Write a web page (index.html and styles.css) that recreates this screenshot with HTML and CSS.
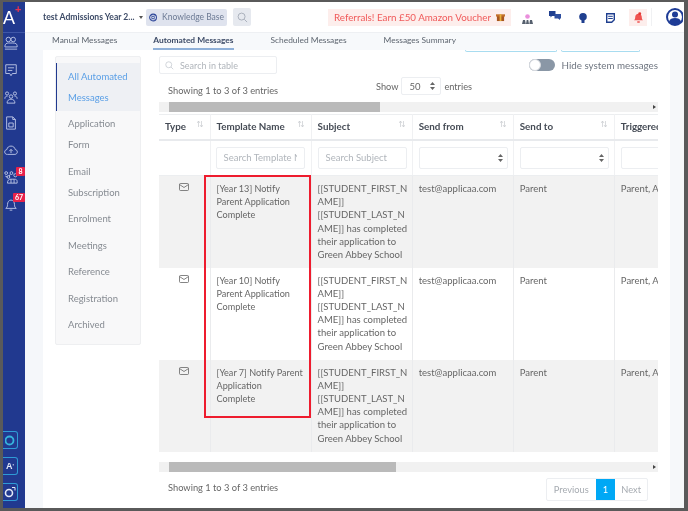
FILE: index.html
```html
<!doctype html>
<html>
  <head>
    <meta charset="utf-8">
    <meta name="viewport" content="width=device-width">
    <link rel="stylesheet" href="styles.css">
  </head>
  <body>
    <div class="frame">
      <nav class="side">
        <div class="logo">A<span class="plus">+</span></div>
        <div class="side-icons">
          <svg class="side-icon" viewBox="0 0 16 16"><circle cx="5" cy="4" r="2.600"/><circle cx="10.500" cy="4" r="2.600"/><path d="M1 12c0-3 2-4 4-4h5c3 0 5 1 5 3v1.500H1zM1 15h14"/></svg>
          <svg class="side-icon" viewBox="0 0 16 16"><path d="M2 2h12v10H9.500L8 14.500 6.500 12H2zM4.500 5.500h7M4.500 8.500h5"/></svg>
          <svg class="side-icon" viewBox="0 0 16 16"><circle cx="3.500" cy="4" r="1.800"/><circle cx="12.500" cy="4" r="1.800"/><circle cx="8" cy="7.500" r="2"/><path d="M1 10c0-2 1-3 3-3M15 10c0-2-1-3-3-3M3.500 15c0-3 2-4.500 4.500-4.500s4.500 1.500 4.500 4.500z"/></svg>
          <svg class="side-icon" viewBox="0 0 16 16"><path d="M3 1h7l3 3v11H3zM10 1v3h3M5.500 8h5v4.500h-5z"/></svg>
          <svg class="side-icon" viewBox="0 0 16 16"><path d="M4 13H3.500C2 13 .8 11.800.8 10.200.8 8.700 2 7.600 3.300 7.500 3.700 5 5.600 3.500 8 3.500c2.600 0 4.400 1.700 4.800 4 1.400.1 2.400 1.200 2.400 2.700S14 13 12.500 13H4M8 11.500V7.500M6 9.300 8 7.300l2 2"/></svg>
          <div class="side-item">
            <svg class="side-icon" viewBox="0 0 16 16"><circle cx="2.500" cy="3.500" r="1.600"/><circle cx="8.500" cy="3.500" r="1.600"/><circle cx="13" cy="6" r="1.800"/><circle cx="5" cy="8" r="1.600"/><path d="M1.500 7 4 8M7 5l-1 2M4 15c0-3 1-4.500 4-4.500h4c2 0 3 1 3 2.500v2zM8 10.500V15M11.500 10.500V15"/></svg>
            <span class="badge badge-8">8</span>
          </div>
          <div class="side-item">
            <svg class="side-icon" viewBox="0 0 16 16"><path d="M2 13c1.500-1 2-2 2-4.500S5.500 3.500 8 3.500s4 2.500 4 5 .5 3.500 2 4.500zM6.500 15h3"/></svg>
            <span class="badge badge-67">67</span>
          </div>
        </div>
        <div class="tiles">
          <div class="tile"><svg width="11" height="11" viewBox="0 0 11 11"><circle cx="4.500" cy="5.500" r="4" fill="none" stroke="#35b4dc" stroke-width="1.800"/></svg></div>
          <div class="tile tile-text">A<sup>'</sup></div>
          <div class="tile"><svg width="12" height="12" viewBox="0 0 12 12"><circle cx="5" cy="7" r="3.500" fill="none" stroke="#e4e9f6" stroke-width="1.600"/><path d="M8 1.500h3v3" fill="none" stroke="#e4e9f6"/></svg></div>
        </div>
      </nav>

      <div class="main">
        <header class="top">
          <span class="school">test Admissions Year 2...</span>
          <span class="caret"></span>
          <a class="kb">
            <svg width="9" height="9" viewBox="0 0 10 10"><circle cx="5" cy="5" r="4.200" fill="none" stroke="#2d4699" stroke-width="1.300"/><circle cx="5" cy="5" r="1.700" fill="none" stroke="#2d4699"/><path d="M2 2l2 2M8 2 6 4M2 8l2-2M8 8 6 6" stroke="#2d4699"/></svg>
            Knowledge Base
          </a>
          <a class="search-btn">
            <svg width="11" height="11" viewBox="0 0 12 12"><circle cx="5" cy="5" r="3.800" fill="none" stroke="#a5acb8"/><path d="M8 8l3 3" stroke="#a5acb8"/></svg>
          </a>
          <a class="referral">Referrals! Earn £50 Amazon Voucher
            <svg width="9" height="10" viewBox="0 0 10 10"><path d="M1 3h8v6.500H1z" fill="#a8561f"/><path d="M0 2h10v2.500H0z" fill="#c2702b"/><path d="M4 2h2v7.500H4z" fill="#e8b23c"/></svg>
          </a>
          <div class="top-icons">
            <svg class="ti ti-rank" width="11" height="10" viewBox="0 0 11 10"><circle cx="5.500" cy="2.500" r="2.300" fill="#ea8fdc"/><path d="M0 10l1-4h2l.8 4zM4 10l.7-4h1.600L7 10zM7.300 10 8 6h2l1 4z" fill="#56606e"/></svg>
            <svg class="ti ti-chat" width="12" height="9" viewBox="0 0 12 9"><path d="M0 0h6.500v5H3L1.500 6.500V5H0z" fill="#1f3f8f"/><path d="M5.500 3H12v4.500h-1V9L9 7.500H5.500z" fill="#2f4f9f"/></svg>
            <svg class="ti ti-bulb" width="8" height="10" viewBox="0 0 8 10"><circle cx="4" cy="3.800" r="3.800" fill="#1f3f8f"/><path d="M2.500 7h3v3h-3z" fill="#1f3f8f"/></svg>
            <svg class="ti ti-note" width="9" height="10" viewBox="0 0 9 10"><path d="M.7.7h7.600v6L5.700 9.300h-5z" fill="none" stroke="#1f3f8f" stroke-width="1.400"/><path d="M2.200 3.300h4.600M2.200 5.500h4.600" stroke="#1f3f8f"/></svg>
            <span class="bell-box"><svg width="9" height="11" viewBox="0 0 11 13"><path d="M0 10c1-1 1.500-2 1.500-4S3 2 5.500 2s4 2 4 4 .5 3 1.500 4zM4 11h3v2H4z" fill="#ef5350"/><circle cx="7" cy="2" r="1.800" fill="#e53935"/></svg></span>
            <span class="top-sep"></span>
            <svg class="avatar" width="17" height="18" viewBox="0 0 17 18"><circle cx="9" cy="9" r="8" fill="#fff" stroke="#1e3c96" stroke-width="2"/><circle cx="9" cy="6.500" r="3" fill="#1e3c96"/><path d="M3 13.500c1-3 3-3.500 6-3.500s5 .5 6 3.500c-1.500 2-3.500 3.500-6 3.500s-4.500-1.500-6-3.500z" fill="#1e3c96"/></svg>
          </div>
        </header>

        <div class="tabs">
          <a class="tab tab-manual">Manual Messages</a>
          <a class="tab tab-auto active">Automated Messages</a>
          <a class="tab tab-sched">Scheduled Messages</a>
          <a class="tab tab-summary">Messages Summary</a>
        </div>

        <div class="body">
          <div class="panel">
            <a class="panel-item active">All Automated Messages</a>
            <a class="panel-item">Application Form</a>
            <a class="panel-item">Email Subscription</a>
            <a class="panel-item">Enrolment</a>
            <a class="panel-item">Meetings</a>
            <a class="panel-item">Reference</a>
            <a class="panel-item">Registration</a>
            <a class="panel-item">Archived</a>
          </div>

          <div class="content">
            <div class="stubs">
              <span class="stub stub-a"></span>
              <span class="stub stub-b"></span>
            </div>
            <div class="tools">
              <label class="table-search">
                <svg width="9" height="9" viewBox="0 0 12 12"><circle cx="5" cy="5" r="4" fill="none" stroke="#c3c8cf"/><path d="M8 8l3 3" stroke="#c3c8cf"/></svg>
                <input type="text" placeholder="Search in table">
              </label>
              <div class="hide-sys">
                <span class="toggle"><span class="knob"></span></span>
                Hide system messages
              </div>
            </div>
            <div class="info">
              <span class="info-count">Showing 1 to 3 of 3 entries</span>
              <div class="length">
                Show
                <span class="select length-select">50 <svg class="updown" width="5" height="8" viewBox="0 0 5 8"><path d="M2.500 0 5 3H0zM2.500 8 0 5h5z"/></svg></span>
                entries
              </div>
            </div>

            <div class="bar bar-top">
              <span class="thumb thumb-top"></span>
              <span class="arrow"></span>
            </div>

            <div class="table-wrap">
              <table class="grid">
                <colgroup>
                  <col class="c-type"><col class="c-name"><col class="c-mid"><col class="c-mid"><col class="c-mid"><col class="c-last">
                </colgroup>
                <thead>
                  <tr class="head">
                    <th>Type<svg class="sort" width="6" height="6" viewBox="0 0 6 6"><path d="M1.500 0v6M4.500 0v6M0 2l1.500-2L3 2M3 4l1.500 2L6 4"/></svg></th>
                    <th>Template Name<svg class="sort" width="6" height="6" viewBox="0 0 6 6"><path d="M1.500 0v6M4.500 0v6M0 2l1.500-2L3 2M3 4l1.500 2L6 4"/></svg></th>
                    <th>Subject<svg class="sort" width="6" height="6" viewBox="0 0 6 6"><path d="M1.500 0v6M4.500 0v6M0 2l1.500-2L3 2M3 4l1.500 2L6 4"/></svg></th>
                    <th>Send from<svg class="sort" width="6" height="6" viewBox="0 0 6 6"><path d="M1.500 0v6M4.500 0v6M0 2l1.500-2L3 2M3 4l1.500 2L6 4"/></svg></th>
                    <th>Send to<svg class="sort" width="6" height="6" viewBox="0 0 6 6"><path d="M1.500 0v6M4.500 0v6M0 2l1.500-2L3 2M3 4l1.500 2L6 4"/></svg></th>
                    <th class="clip">Triggered by</th>
                  </tr>
                  <tr class="filters">
                    <td></td>
                    <td><input type="text" placeholder="Search Template Name"></td>
                    <td class="filter-mid"><input type="text" placeholder="Search Subject"></td>
                    <td class="filter-mid"><span class="select"><svg class="updown" width="5" height="8" viewBox="0 0 5 8"><path d="M2.500 0 5 3H0zM2.500 8 0 5h5z"/></svg></span></td>
                    <td class="filter-mid"><span class="select"><svg class="updown" width="5" height="8" viewBox="0 0 5 8"><path d="M2.500 0 5 3H0zM2.500 8 0 5h5z"/></svg></span></td>
                    <td class="filter-mid"><span class="select"><svg class="updown" width="5" height="8" viewBox="0 0 5 8"><path d="M2.500 0 5 3H0zM2.500 8 0 5h5z"/></svg></span></td>
                  </tr>
                </thead>
                <tbody>
                  <tr class="row odd">
                    <td class="mail"><svg width="10" height="8" viewBox="0 0 10 8"><rect x=".5" y=".5" width="9" height="7" rx="1"/><path d="M.5 1.500 5 4.500l4.500-3"/></svg></td>
                    <td class="name">[Year 13] Notify Parent Application Complete</td>
                    <td class="subject">[[STUDENT_FIRST_NAME]] [[STUDENT_LAST_NAME]] has completed their application to Green Abbey School</td>
                    <td>test@applicaa.com</td>
                    <td>Parent</td>
                    <td class="nowrap">Parent, Applicant</td>
                  </tr>
                  <tr class="row">
                    <td class="mail"><svg width="10" height="8" viewBox="0 0 10 8"><rect x=".5" y=".5" width="9" height="7" rx="1"/><path d="M.5 1.500 5 4.500l4.500-3"/></svg></td>
                    <td class="name">[Year 10] Notify Parent Application Complete</td>
                    <td class="subject">[[STUDENT_FIRST_NAME]] [[STUDENT_LAST_NAME]] has completed their application to Green Abbey School</td>
                    <td>test@applicaa.com</td>
                    <td>Parent</td>
                    <td class="nowrap">Parent, Applicant</td>
                  </tr>
                  <tr class="row odd">
                    <td class="mail"><svg width="10" height="8" viewBox="0 0 10 8"><rect x=".5" y=".5" width="9" height="7" rx="1"/><path d="M.5 1.500 5 4.500l4.500-3"/></svg></td>
                    <td class="name">[Year 7] Notify Parent<br>Application<br>Complete</td>
                    <td class="subject">[[STUDENT_FIRST_NAME]] [[STUDENT_LAST_NAME]] has completed their application to Green Abbey School</td>
                    <td>test@applicaa.com</td>
                    <td>Parent</td>
                    <td class="nowrap">Parent, Applicant</td>
                  </tr>
                </tbody>
              </table>
              <div class="highlight"></div>
            </div>

            <div class="bar bar-bottom">
              <span class="thumb thumb-bottom"></span>
              <span class="arrow"></span>
            </div>

            <div class="foot">
              <span>Showing 1 to 3 of 3 entries</span>
              <div class="pager">
                <a class="page">Previous</a>
                <a class="page current">1</a>
                <a class="page page-next">Next</a>
              </div>
            </div>
          </div>
        </div>
      </div>
    </div>
  </body>
</html>
```

FILE: styles.css
```css
* {
  box-sizing: border-box;
}
html, body {
  height: 100%;
  margin: 0;
  overflow: hidden;
  font-family: "Lato", sans-serif;
  font-size: 9.3px;
  color: #666;
  background: #5a5a5a;
}
.frame {
  display: flex;
  width: 688px;
  height: 511px;
  padding: 2px 4px 3px 3px;
  filter: blur(0.35px);
}

/* left nav */
.side {
  display: flex;
  flex-direction: column;
  flex: none;
  width: 22px;
  background: #21398f;
}
.logo {
  position: relative;
  height: 31px;
  padding: 3px 0 0 0;
  border-bottom: 1px solid #3f57a8;
  font-family: "Liberation Sans", sans-serif;
  font-size: 18px;
  line-height: 26px;
  color: #fff;
}
.plus {
  position: absolute;
  top: 0;
  left: 12px;
  font-size: 11px;
  font-weight: bold;
  line-height: 14px;
  color: #e8324f;
}
.side-icons {
  display: flex;
  flex-direction: column;
  gap: 10.750px;
  padding: 2px 0 0 1px;
}
.side-item {
  position: relative;
  height: 16px;
}
.side-icon {
  display: block;
  width: 14px;
  height: 16px;
  fill: none;
  stroke: #c3cdea;
  stroke-width: 1;
}
.badge {
  position: absolute;
  height: 9px;
  border-radius: 1px;
  font-size: 7px;
  font-weight: bold;
  line-height: 9px;
  text-align: center;
  color: #fff;
  background: #e8214a;
}
.badge-8 {
  top: -2px;
  left: 12px;
  width: 9px;
}
.badge-67 {
  top: -3px;
  left: 9px;
  width: 12px;
}
.tiles {
  display: flex;
  flex-direction: column;
  gap: 8px;
  margin-top: auto;
  padding-bottom: 7px;
}
.tile {
  display: flex;
  align-items: center;
  justify-content: center;
  width: 15px;
  height: 18px;
  border: 1px solid #2f9bd6;
  border-left: 0;
  border-radius: 0 3px 3px 0;
}
.tile-text {
  font-family: "Liberation Sans", sans-serif;
  font-size: 9px;
  font-weight: bold;
  color: #e4e9f6;
}
.tile-text sup {
  font-size: 6px;
  line-height: 0;
}

/* header */
.main {
  display: flex;
  flex-direction: column;
  flex: 1;
  min-width: 0;
  background: #fff;
}
.top {
  display: flex;
  align-items: center;
  flex: none;
  height: 30px;
  padding-left: 18px;
  overflow: hidden;
  background: #fff;
}
.school {
  flex: none;
  width: 91px;
  font-size: 8.600px;
  font-weight: bold;
  color: #3c4a66;
  white-space: nowrap;
}
.caret {
  flex: none;
  width: 0;
  height: 0;
  margin-left: 5px;
  border: 2.500px solid transparent;
  border-top: 3px solid #555;
  border-bottom: 0;
}
.kb {
  display: flex;
  flex: none;
  align-items: center;
  gap: 5px;
  width: 81px;
  height: 17px;
  margin-left: 3px;
  padding: 0 3px;
  border-radius: 2px;
  font-size: 8.500px;
  white-space: nowrap;
  color: #6c7a94;
  background: #dfe3ee;
}
.search-btn {
  display: flex;
  flex: none;
  align-items: center;
  justify-content: center;
  width: 18px;
  height: 18px;
  margin-left: 6px;
  border-radius: 2px;
  background: #e6e9ef;
}
.referral {
  display: flex;
  flex: none;
  align-items: center;
  justify-content: center;
  gap: 5px;
  width: 183px;
  height: 17px;
  margin-left: 77px;
  font-size: 9.800px;
  white-space: nowrap;
  color: #f05a5a;
  background: #fdeeec;
}
.top-icons {
  display: flex;
  flex: none;
  align-items: center;
}
.ti {
  flex: none;
}
.ti-rank {
  margin: 3px 0 0 11px;
}
.ti-chat {
  margin: -3px 0 0 16px;
}
.ti-bulb {
  margin: 1px 0 0 18px;
}
.ti-note {
  margin: 1px 0 0 19px;
}
.bell-box {
  display: flex;
  flex: none;
  align-items: center;
  justify-content: center;
  width: 18px;
  height: 17px;
  margin-left: 14px;
  background: #fdeeec;
}
.top-sep {
  flex: none;
  width: 1px;
  height: 18px;
  margin-left: 4px;
  background: #f0f1f3;
}
.avatar {
  flex: none;
  margin-left: 14px;
}

/* tabs */
.tabs {
  position: relative;
  display: flex;
  flex: none;
  height: 18px;
  border-top: 1px solid #eef0f3;
  background: #f7f9fb;
  font-size: 8.400px;
  color: #5e6670;
}
.tab {
  height: 17px;
  line-height: 15px;
  white-space: nowrap;
}
.tab-manual {
  margin-left: 27px;
}
.tab-auto {
  margin-left: 36px;
}
.tab-sched {
  margin-left: 37px;
}
.tab-summary {
  margin-left: 37px;
}
.tab.active {
  border-bottom: 2px solid #8fb0d8;
  font-weight: bold;
  color: #3c4a66;
}

/* page body */
.body {
  display: flex;
  flex: 1;
  min-height: 0;
  padding: 0 0 0 18px;
  border-right: 14px solid #f6f8fa;
  background: linear-gradient(to right, #f5f7fa 18px, #fff 18px);
}
.panel {
  flex: none;
  width: 86px;
  height: 289px;
  margin: 6px 18px 0 12px;
  padding: 6px 0 0 0;
  border: 1px solid #eeeff1;
  border-radius: 2px;
  background: #f8f8f9;
}
.panel-item {
  display: block;
  padding: 2.750px 12px;
  font-size: 9.500px;
  line-height: 21px;
  color: #868b92;
}
.panel-item.active {
  padding-left: 11px;
  border-left: 1px solid #21398f;
  color: #5a9fe6;
  background: #eef0f4;
}
.content {
  flex: none;
  width: 499px;
}
.stubs {
  display: flex;
  justify-content: flex-end;
  gap: 4px;
  height: 2px;
  padding-right: 18px;
}
.stub {
  height: 2px;
  border: 1px solid #a8dcf0;
  border-top: 0;
  border-radius: 0 0 2px 2px;
}
.stub-a {
  width: 92px;
}
.stub-b {
  width: 79px;
}
.tools {
  display: flex;
  justify-content: space-between;
  height: 18px;
  margin-top: 4px;
}
.table-search {
  display: flex;
  align-items: center;
  gap: 6px;
  width: 118px;
  height: 18px;
  padding-left: 5px;
  border: 1px solid #eceef1;
  border-radius: 2px;
}
.table-search input {
  width: 90px;
  padding: 0;
  border: 0;
  outline: 0;
  font-family: inherit;
  font-size: 9px;
}
input::placeholder {
  color: #b0b5bb;
  opacity: 1;
}
.hide-sys {
  display: flex;
  align-items: center;
  gap: 6px;
  font-size: 9.800px;
  color: #6f7680;
}
.toggle {
  display: block;
  width: 26px;
  height: 12px;
  border-radius: 6px;
  background: #8a97a6;
}
.knob {
  display: block;
  width: 12px;
  height: 12px;
  border: 1px solid #d8dbe0;
  border-radius: 50%;
  background: #fff;
}
.info {
  display: flex;
  justify-content: space-between;
  height: 28px;
  padding: 3px 186px 0 9px;
}
.info-count {
  padding-top: 8px;
  white-space: nowrap;
}
.length {
  display: flex;
  align-items: center;
  gap: 3px;
  height: 18px;
  font-size: 9.200px;
}
.select {
  display: flex;
  align-items: center;
  justify-content: flex-end;
  width: 89px;
  height: 22px;
  padding-right: 4px;
  border: 1px solid #eceef1;
  border-radius: 2px;
  background: #fff;
}
.length-select {
  justify-content: space-between;
  width: 40px;
  height: 18px;
  padding: 0 5px 0 7px;
  font-size: 9.500px;
}
.updown {
  fill: #666;
}
.bar {
  position: relative;
  display: flex;
  justify-content: space-between;
  align-items: center;
  height: 10px;
  padding: 0 2px 0 10px;
  background: #f1f1f1;
}
.thumb {
  display: block;
  height: 100%;
  background: #bababa;
}
.arrow {
  width: 0;
  height: 0;
  border-left: 3px solid #444;
  border-top: 2.500px solid transparent;
  border-bottom: 2.500px solid transparent;
}
.thumb-top {
  width: 211px;
}
.thumb-bottom {
  width: 227px;
}

/* table */
.table-wrap {
  position: relative;
  overflow: hidden;
  margin-top: 2px;
}
.grid {
  width: 558px;
  table-layout: fixed;
  border-collapse: collapse;
  font-size: 9.500px;
  line-height: 13.200px;
}
.c-type {
  width: 51px;
}
.c-name {
  width: 101px;
}
.c-mid {
  width: 101px;
}
.c-last {
  width: 102px;
}
.head th {
  position: relative;
  height: 25px;
  padding: 0 6px;
  border-top: 1px solid #eceef0;
  border-right: 1px solid #f0f1f3;
  border-bottom: 2px solid #e8eaed;
  font-size: 9.800px;
  text-align: left;
  color: #454b55;
}
.clip {
  overflow: hidden;
  white-space: nowrap;
}
.sort {
  position: absolute;
  top: 6px;
  right: 7px;
  fill: none;
  stroke: #c9ccd0;
  stroke-width: 0.7;
}
.filters td {
  height: 36px;
  padding: 0 5px;
  border-right: 1px solid #f0f1f3;
  border-bottom: 1px solid #eceef0;
}
.filters .filter-mid {
  padding-left: 6px;
  padding-right: 4px;
}
.filters input {
  display: block;
  width: 89px;
  height: 22px;
  padding: 0 7px;
  border: 1px solid #eceef1;
  border-radius: 2px;
  outline: 0;
  font: inherit;
}
.row td {
  height: 92px;
  padding: 6px 6px 5px;
  border-right: 1px solid #eaebed;
  vertical-align: top;
}
.row .name {
  padding-right: 7px;
  font-size: 9.100px;
}
.row .subject {
  padding-right: 2px;
  overflow-wrap: anywhere;
}
.row.odd {
  background: #f2f2f2;
}
.row .mail {
  padding-top: 7px;
  text-align: center;
}
.mail svg {
  display: block;
  margin: 0 auto;
  fill: none;
  stroke: #666;
  stroke-width: 0.8;
}
.nowrap {
  white-space: nowrap;
}
.highlight {
  position: absolute;
  top: 61px;
  left: 45px;
  width: 107px;
  height: 243px;
  border: 2px solid #ee1c2e;
  pointer-events: none;
}
.bar-bottom {
  margin-top: 10px;
}

/* footer */
.foot {
  display: flex;
  justify-content: space-between;
  align-items: flex-start;
  padding: 6px 10px 0 9px;
}
.foot > span {
  padding-top: 4px;
}
.pager {
  display: flex;
  height: 23px;
  border: 1px solid #eceef1;
  border-radius: 2px;
}
.page {
  padding: 0 7px;
  line-height: 21px;
  color: #a6abb1;
}
.page-next {
  padding: 0 6px;
}
.page.current {
  color: #fff;
  background: #00a8f5;
}
```
